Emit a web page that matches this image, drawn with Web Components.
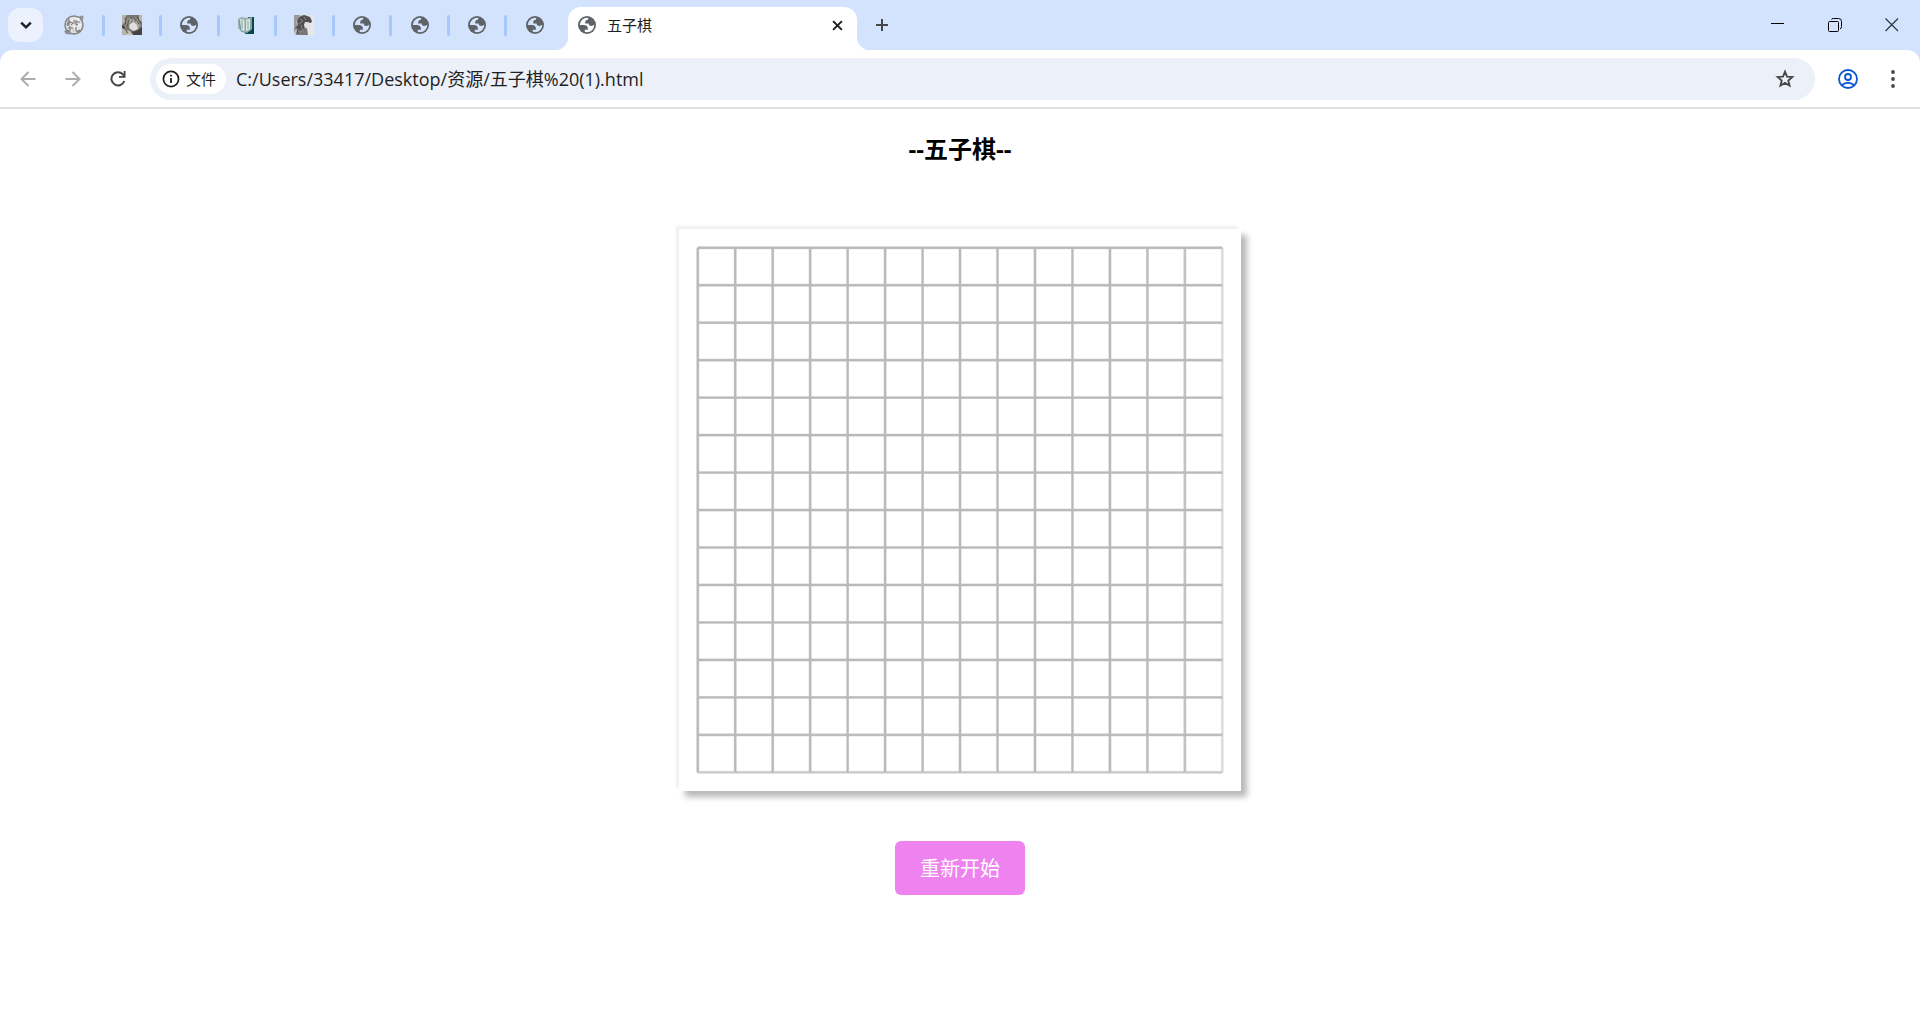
<!DOCTYPE html>
<html lang="zh-CN">
<head>
<meta charset="UTF-8">
<title>五子棋</title>
<style>
    body {
        margin: 0;
        background: #fff;
        color: #000;
        font-family: "Open Sans", "Noto Sans CJK SC", sans-serif;
    }
</style>
</head>
<body>

<browser-window>
    <tab-strip slot="tabs">
        <browser-tab icon="seal" label="图标"></browser-tab>
        <browser-tab icon="portrait" label="头像"></browser-tab>
        <browser-tab icon="globe" label="网页"></browser-tab>
        <browser-tab icon="book" label="书"></browser-tab>
        <browser-tab icon="profile" label="侧面像"></browser-tab>
        <browser-tab icon="globe" label="网页"></browser-tab>
        <browser-tab icon="globe" label="网页"></browser-tab>
        <browser-tab icon="globe" label="网页"></browser-tab>
        <browser-tab icon="globe" label="网页"></browser-tab>
        <active-tab slot="active">五子棋</active-tab>
    </tab-strip>
    <address-bar slot="toolbar" value="C:/Users/33417/Desktop/资源/五子棋%20(1).html">文件</address-bar>
    <gobang-game>
        <span slot="title">--五子棋--</span>
        <span slot="restart">重新开始</span>
    </gobang-game>
</browser-window>

<script>
// iconos: viewBox + contenido
const icons = {
    globe: ['2 2 20 20', `
        <circle cx="12" cy="12" r="10" fill="#5f6368"/>
        <path fill="var(--icon-bg, #d3e3fd)" d="M4 12h4.400c3.407.017 4.922 1.730 4.543 5.140H9.488v2.470a8.004 8.004 0 0 0 10.498-8.083C19.327 12.509 18.332 13 17 13c-2.137 0-3.206-.916-3.206-2.750h-3.748c-.274-2.728.683-4.092 2.870-4.092 0-.975.327-1.597.811-1.970A8 8 0 0 0 4 12z"/>`],
    seal: ['0 0 20 20', `
        <circle cx="10" cy="10" r="9" fill="#e4e4e4" stroke="#858585" stroke-width="1.500"/>
        <path d="M15.500 1.500l3.500-.5-.5 4M.800 16l3-1 3 4-5-.5z" fill="#8b8e94" stroke="#8b8e94"/>
        <path d="M3 7h5M5 4v6q-2 1-2-1l4-2q3 1 0 3M10 5v4M12 5v4q0 2 2 0M12 7h4M4 13h5M6 11v5q-2 1-2-1M9 13q2 1 0 3M12 12v4q2 1 4-1" fill="none" stroke="#777" stroke-width="1.100"/>
        <path d="M8 4v3M13 4h3M10 11v5M14 10h3" stroke="#fff"/>`],
    portrait: ['0 0 20 20', `
        <path fill="#77746f" d="M0 0h20v20H0z"/>
        <path fill="#b7b4ae" d="M0 0h5L2 4l2 2-4 4zM0 13l4 1 1 6H0zM17 0h3v7l-3-2z"/>
        <path fill="#8f8c86" d="M5 3l6-2 5 3 3 6-2 5-5-6-7 2-1 4-2-5z"/>
        <path fill="#e2dfda" d="M8 9l4-2 3 3 1 4-4 2-4-2-1-2z"/>
        <path fill="#45433f" d="M10 17l6-2 4-3v8h-9zM0 10l3 2v2l-3-1z"/>
        <path fill="#c6c2bc" d="M5 15l3 1 3 4H5z"/>
        <path d="M4 4l-1 6M7 5l-2 7M12 3l5 6M15 2l4 6M8 3l4-1M3 14l3 4" fill="none" stroke="#55524e"/>
        <path d="M9 4l-2 4M12 5l-2 3M14 6l3 6" fill="none" stroke="#bcb8b2"/>`],
    book: ['0 0 20 20', `
        <path fill="#03494a" d="M11 2h6v17H8z"/>
        <path fill="#9db0af" d="M1 4l3-2 6 1 5-1v12l-5 4-6-2-3-3z"/>
        <path fill="#dce9e7" d="M3 4l5 1v11l-4-1zM9 5l4-1v10l-4 2z"/>
        <path d="M2 5l2 11 5 2 5-3V3M8 5v11M11 6v8M5 5v9" fill="none" stroke="#6d918e" stroke-width=".8"/>`],
    profile: ['0 0 20 20', `
        <path fill="#c8c8c8" d="M0 0h20v20H0z"/>
        <path fill="#e7e7e5" d="M13 0h7v20h-7z"/>
        <path fill="#999" d="M0 0h6L2 7l2 4-4 7z"/>
        <path fill="#505050" d="M5 2l5-2 6 2 2 4-1 2-5-1-2 3 1 4-4 3-5 3 1-5-2-2 3-3-1-4z"/>
        <path fill="#e2e2e2" d="M11 7l5 1 1 2-1 4-4-1-2-3z"/>
        <path fill="#777" d="M8 14l5-1 1 7H3z"/>
        <path d="M6 4l3 2-4 3M10 2l2 3M2 13l4 3M7 10l1 4M4 17l5-1" fill="none" stroke="#898989"/>`],
    chevron: ['0 0 10 10', '<path d="M1 3l4 4 4-4" fill="none" stroke="#1f1f1f" stroke-width="2"/>'],
    close: ['0 0 10 10', '<path d="M1 1l8 8M9 1L1 9" stroke="#1f1f1f" stroke-width="1.800"/>'],
    plus: ['0 0 14 14', '<path d="M7 1v12M1 7h12" stroke="#474747" stroke-width="2"/>'],
    minimize: ['0 0 14 14', '<path d="M0 5.500h13" stroke="#000"/>'],
    restore: ['0 0 14 14', '<rect x=".5" y="3.500" width="10" height="10" rx="1" fill="none" stroke="#000"/><path d="M3.500 1.500q0-1 2-1h5q3 0 3 3v5q0 2-1.500 2.500" fill="none" stroke="#000"/>'],
    exit: ['0 0 14 14', '<path d="M.5.5l12.500 12.500M13 .5L.5 13" stroke="#30363d" stroke-width="1.200"/>'],
    back: ['0 0 16 16', '<path d="M15.500 8H1.500M8.500 1L1.500 8l7 7" fill="none" stroke="#adadad" stroke-width="2"/>'],
    forward: ['0 0 16 16', '<path d="M.5 8h14M7.500 1l7 7-7 7" fill="none" stroke="#adadad" stroke-width="2"/>'],
    reload: ['0 0 16 16', '<path d="M14.300 10A6.600 6.600 0 1 1 12.800 3.300L14.500 5.200" fill="none" stroke="#474747" stroke-width="2"/><path d="M15.500 0v6.800H9V5h4.700V0z" fill="#474747"/>'],
    info: ['0 0 18 18', '<circle cx="9" cy="9" r="7.600" fill="none" stroke="#1f1f1f" stroke-width="1.700"/><path d="M9 8v5M9 4.800v1.800" stroke="#1f1f1f" stroke-width="1.800"/>'],
    star: ['0 0 20 20', '<path d="M10 2.700l2 4.900 5.400.4-4.100 3.500 1.300 5.200L10 13.900l-4.600 2.800 1.300-5.200L2.600 8l5.400-.4z" fill="none" stroke="#474747" stroke-width="1.800"/>'],
    account: ['0 0 20 20', '<g fill="none" stroke="#0b57d0" stroke-width="1.800"><circle cx="10" cy="10" r="9"/><circle cx="10" cy="8" r="3"/><path d="M3.800 16.300q6.200-5 12.400 0"/></g>'],
    dots: ['0 0 20 20', '<g fill="#474747"><circle cx="10" cy="3" r="1.900"/><circle cx="10" cy="10" r="1.900"/><circle cx="10" cy="17" r="1.900"/></g>']
};

function icon(name, size) {
    const [box, content] = icons[name];
    return `<svg viewBox="${box}" width="${size}" height="${size}" aria-hidden="true">${content}</svg>`;
}

// estilos comunes de los botones
const buttonReset = `
    button {
        display: flex;
        align-items: center;
        justify-content: center;
        padding: 0;
        border: 0;
        background: none;
        color: inherit;
        font: inherit;
        cursor: pointer;
    }
    svg {
        display: block;
        flex: none;
    }
`;

class BrowserWindow extends HTMLElement {
    constructor() {
        super();
        this.attachShadow({ mode: "open" });
    }

    connectedCallback() {
        this.shadowRoot.innerHTML = `
            <style>
            :host {
                display: block;
            }
            header {
                background: #d3e3fd;
                border-bottom: 2px solid #e1e1e1;
            }
            </style>
            <header>
                <slot name="tabs"></slot>
                <slot name="toolbar"></slot>
            </header>
            <main><slot></slot></main>
        `;
    }
}

class TabStrip extends HTMLElement {
    constructor() {
        super();
        this.attachShadow({ mode: "open" });
    }

    connectedCallback() {
        this.shadowRoot.innerHTML = `
            <style>
            ${buttonReset}
            :host {
                display: flex;
                height: 50px;
            }
            .search {
                width: 35px;
                height: 34px;
                margin: 8px 4px 0 8px;
                border-radius: 12px;
                background: #ebf1fd;
            }
            .tabs {
                display: grid;
                grid-template-columns: repeat(9, 1fr);
                flex: 0 1 518px;
            }
            .add {
                width: 50px;
                height: 50px;
            }
            .controls {
                display: flex;
                margin-left: auto;
            }
            .controls button {
                width: 57px;
                height: 50px;
            }
            </style>
            <button class="search" aria-label="搜索标签页">${icon('chevron', 12)}</button>
            <div class="tabs"><slot></slot></div>
            <slot name="active"></slot>
            <button class="add" aria-label="新标签页">${icon('plus', 14)}</button>
            <div class="controls">
                <button aria-label="最小化">${icon('minimize', 14)}</button>
                <button aria-label="还原">${icon('restore', 14)}</button>
                <button aria-label="关闭">${icon('exit', 14)}</button>
            </div>
        `;
    }
}

/* browser-tab

atributos:
    - icon
    - label
*/
class BrowserTab extends HTMLElement {
    constructor() {
        super();
        this.attachShadow({ mode: "open" });
    }

    connectedCallback() {
        const name = this.getAttribute('icon') || 'globe';
        const size = name === 'globe' ? 18 : 20;

        this.shadowRoot.innerHTML = `
            <style>
            ${buttonReset}
            :host {
                display: flex;
                align-items: center;
            }
            button {
                flex: 1;
                height: 50px;
            }
            i {
                width: 3px;
                height: 21px;
                border-radius: 2px;
                background: #a8c7fa;
            }
            :host(:last-of-type) i {
                background: none;
            }
            </style>
            <button aria-label="${this.getAttribute('label')}">${icon(name, size)}</button>
            <i></i>
        `;
    }
}

class ActiveTab extends HTMLElement {
    constructor() {
        super();
        this.attachShadow({ mode: "open" });
    }

    connectedCallback() {
        this.shadowRoot.innerHTML = `
            <style>
            ${buttonReset}
            :host {
                --icon-bg: #fff;
                position: relative;
                display: flex;
                align-items: center;
                box-sizing: border-box;
                width: 289px;
                height: 43px;
                margin: 7px 0 0 3px;
                padding: 0 10px 7px 10px;
                border-radius: 13px 13px 0 0;
                background: #fff;
                font-size: 15px;
                line-height: 20px;
                color: #1f1f1f;
            }
            /* curvas de la base de la pestaña */
            :host::before,
            :host::after {
                content: "";
                position: absolute;
                bottom: 0;
                width: 14px;
                height: 14px;
            }
            :host::before {
                right: 100%;
                background: radial-gradient(circle at 0 0, transparent 14px, #fff 15px);
            }
            :host::after {
                left: 100%;
                background: radial-gradient(circle at 100% 0, transparent 14px, #fff 15px);
            }
            span {
                flex: 1;
                padding-left: 11px;
            }
            button {
                width: 20px;
                height: 20px;
            }
            </style>
            ${icon('globe', 18)}
            <span><slot></slot></span>
            <button aria-label="关闭标签页">${icon('close', 11)}</button>
        `;
    }
}

/* address-bar

atributos:
    - value
*/
class AddressBar extends HTMLElement {
    constructor() {
        super();
        this.attachShadow({ mode: "open" });
    }

    connectedCallback() {
        this.shadowRoot.innerHTML = `
            <style>
            ${buttonReset}
            :host {
                display: flex;
                align-items: center;
                box-sizing: border-box;
                height: 57px;
                padding: 0 5px;
                border-radius: 13px 13px 0 0;
                background: #fff;
            }
            .nav {
                width: 45px;
                height: 42px;
            }
            .box {
                display: flex;
                align-items: center;
                flex: 1;
                box-sizing: border-box;
                min-width: 0;
                height: 42px;
                margin: 0 10px;
                padding: 0 20px 0 6px;
                border-radius: 21px;
                background: #ecf0f9;
            }
            .chip {
                gap: 6px;
                height: 30px;
                padding: 0 10px 0 6px;
                border-radius: 15px;
                background: #fff;
                font-size: 15px;
                line-height: 20px;
                color: #1f1f1f;
                white-space: nowrap;
            }
            input {
                flex: 1;
                min-width: 0;
                height: 28px;
                padding: 0 0 2px;
                margin-left: 10px;
                border: 0;
                outline: 0;
                background: none;
                color: #1f1f1f;
                font-family: inherit;
                font-size: 18px;
            }
            </style>
            <button class="nav" aria-label="后退">${icon('back', 16)}</button>
            <button class="nav" aria-label="前进">${icon('forward', 16)}</button>
            <button class="nav" aria-label="重新加载">${icon('reload', 16)}</button>
            <div class="box">
                <button class="chip">${icon('info', 18)}<slot></slot></button>
                <input type="text" aria-label="地址" spellcheck="false">
                <button aria-label="收藏">${icon('star', 20)}</button>
            </div>
            <button class="nav" aria-label="账户">${icon('account', 20)}</button>
            <button class="nav" aria-label="菜单">${icon('dots', 20)}</button>
        `;
        this.shadowRoot.querySelector('input').value = this.getAttribute('value') || '';
    }
}

class GobangGame extends HTMLElement {
    constructor() {
        super();
        this.attachShadow({ mode: "open" });
    }

    connectedCallback() {
        this.shadowRoot.innerHTML = `
            <style>
            :host {
                display: flex;
                flex-direction: column;
                align-items: center;
                padding: 23px 10px;
            }
            h3 {
                margin: 0;
                font-size: 24px;
                line-height: 34px;
            }
            canvas {
                display: block;
                width: 562px;
                max-width: 100%;
                margin: 63px 0 50px;
                box-shadow: -3px -3px 3px #efefef, 6px 6px 6px #b9b9b9;
            }
            button {
                padding: 13px 25px 11px;
                border: 0;
                border-radius: 6px;
                background: #ee82ee;
                color: #fff;
                font-family: inherit;
                font-size: 20px;
                line-height: 30px;
                cursor: pointer;
            }
            </style>
            <h3><slot name="title"></slot></h3>
            <canvas width="450" height="450"></canvas>
            <button><slot name="restart"></slot></button>
        `;

        this.drawBoard();
        this.shadowRoot.querySelector('button').addEventListener('click', () => this.drawBoard());
    }

    //Pintamos el tablero de 15 x 15
    drawBoard() {
        const context = this.shadowRoot.querySelector('canvas').getContext('2d');
        context.clearRect(0, 0, 450, 450);
        context.beginPath();
        context.strokeStyle = '#b9b9b9';

        for (let i = 0; i < 15; i++) {
            context.moveTo(15, 15 + i * 30);
            context.lineTo(435, 15 + i * 30);
            context.stroke();
            context.moveTo(15 + i * 30, 15);
            context.lineTo(15 + i * 30, 435);
            context.stroke();
        }
    }
}

window.customElements.define("browser-window", BrowserWindow);
window.customElements.define("tab-strip", TabStrip);
window.customElements.define("browser-tab", BrowserTab);
window.customElements.define("active-tab", ActiveTab);
window.customElements.define("address-bar", AddressBar);
window.customElements.define("gobang-game", GobangGame);
</script>
</body>
</html>
